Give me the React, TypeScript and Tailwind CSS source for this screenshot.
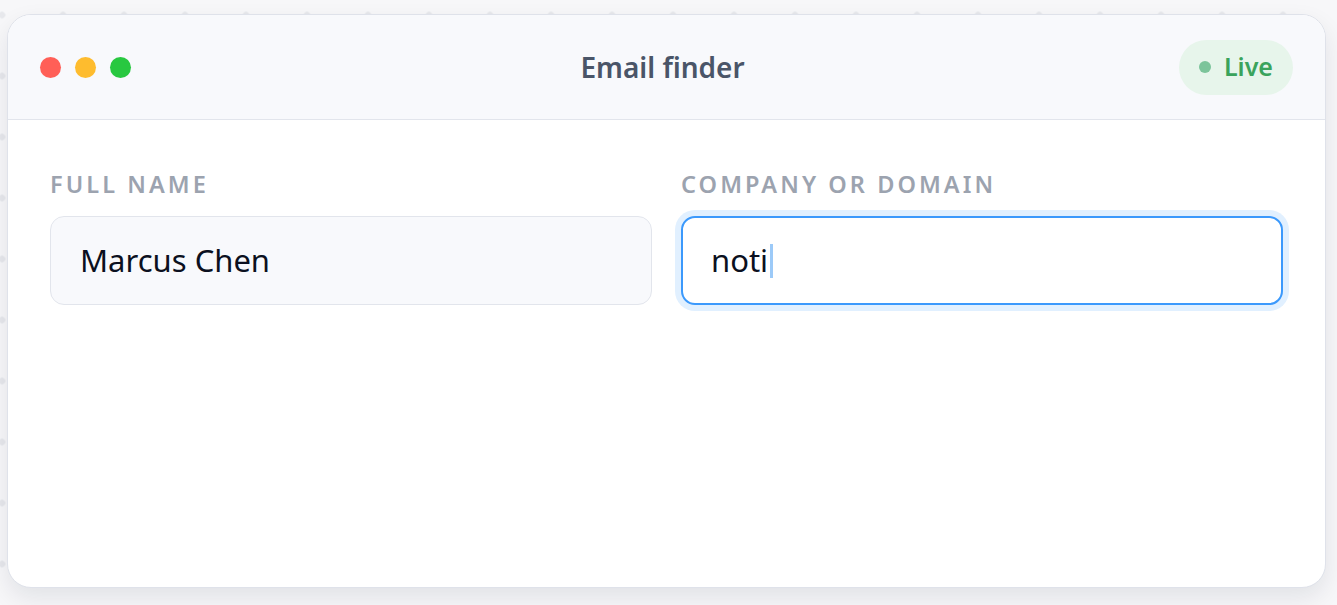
export default function App() {
  return (
    <div
      className="min-h-screen w-full bg-[#f7f7f9] bg-[radial-gradient(circle,#e7e8ec_3px,transparent_3.5px)] bg-[length:61px_61px] bg-[position:-28.5px_-15.5px] pl-[7px] pt-[14px] font-['Noto_Sans',sans-serif]"
    >
      <div className="flex h-[574px] w-[1319px] flex-col overflow-hidden rounded-[24px] border border-[#dfe2ea] bg-white shadow-[0_10px_24px_rgba(15,23,42,0.09)]">
        {/* title bar */}
        <div className="grid h-[105px] shrink-0 grid-cols-[1fr_auto_1fr] items-center border-b border-[#e2e5ec] bg-[#f8f9fc] px-8">
          <div className="flex items-center gap-[14px]">
            <span className="h-[21px] w-[21px] rounded-full bg-[#ff5f57]" />
            <span className="h-[21px] w-[21px] rounded-full bg-[#febc2e]" />
            <span className="h-[21px] w-[21px] rounded-full bg-[#28c840]" />
          </div>
          <h1 className="pr-[8px] text-[28px] font-semibold text-[#4a5568]">Email finder</h1>
          <div className="flex justify-end">
            <div className="flex h-[55px] items-center gap-[13px] rounded-full bg-[#e7f5eb] pl-[20px] pr-[20px]">
              <span className="h-[12px] w-[12px] rounded-full bg-[#7cc49a]" />
              <span className="text-[25px] font-semibold text-[#3aa35c]">Live</span>
            </div>
          </div>
        </div>

        {/* form */}
        <div className="grid grid-cols-2 gap-[29px] px-[42px] pt-[48px]">
          <div className="flex flex-col gap-[16px]">
            <label className="text-[23.5px] font-semibold uppercase leading-[32px] tracking-[0.13em] text-[#9ca3af]">
              Full name
            </label>
            <div className="flex h-[89px] items-center rounded-[14px] border border-[#e2e5ec] bg-[#f8f9fc] px-[29px] text-[31px] text-[#0b1020]">
              Marcus Chen
            </div>
          </div>
          <div className="flex flex-col gap-[16px]">
            <label className="text-[23.5px] font-semibold uppercase leading-[32px] tracking-[0.13em] text-[#9ca3af]">
              Company or domain
            </label>
            <div className="flex h-[89px] items-center rounded-[14px] border-2 border-[#3b99fc] bg-white px-[28px] text-[31px] text-[#0b1020] ring-[6px] ring-[#e1f0ff]">
              noti
              <span className="ml-[2px] h-[34px] w-[3px] bg-[#9ccaf8]" />
            </div>
          </div>
        </div>
      </div>
    </div>
  );
}
